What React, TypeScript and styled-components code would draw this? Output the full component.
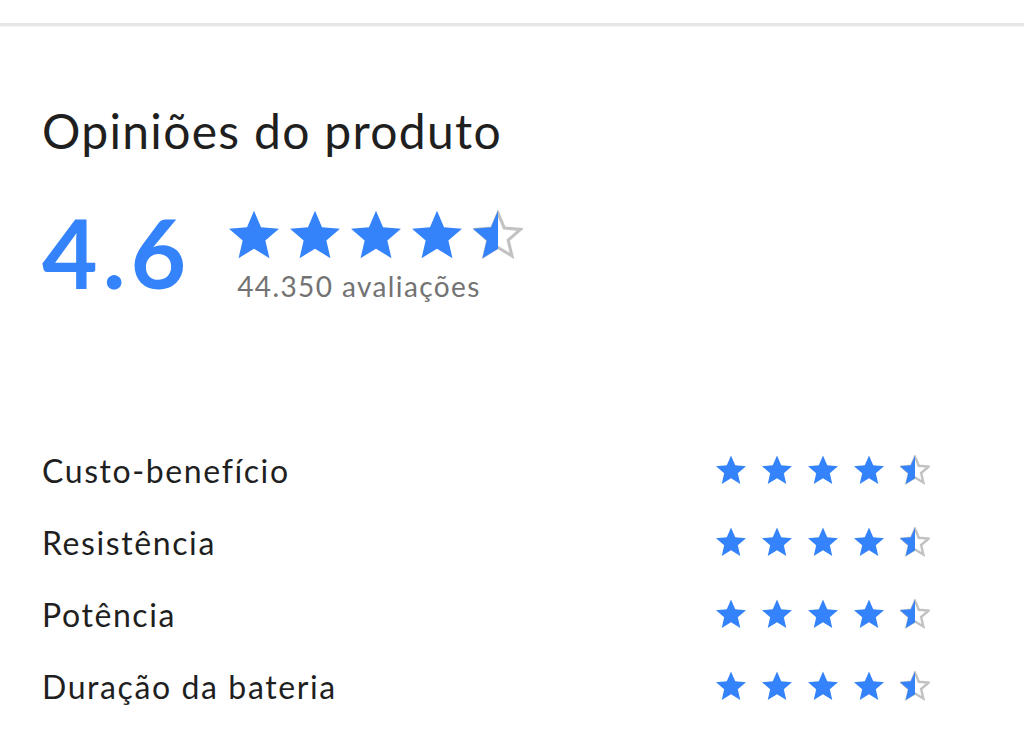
import styled, { createGlobalStyle } from "styled-components";

const GlobalStyle = createGlobalStyle`
  body {
    margin: 0;
    background: #ffffff;
    font-family: "Lato", "Open Sans", sans-serif;
  }
`;

const Page = styled.div`
  width: 1024px;
  height: 739px;
  background: #fff;
  overflow: hidden;
`;

const Divider = styled.div`
  margin-top: 23px;
  height: 3px;
  background: #e6e6e6;
  box-shadow: 0 1px 1px rgba(0, 0, 0, 0.04);
`;

const Section = styled.section`
  padding: 0 94px 0 42px;
`;

const Title = styled.h2`
  margin: 77px 0 0;
  font-size: 48px;
  font-weight: 400;
  line-height: 56px;
  color: #1f1f1f;
  letter-spacing: 1.3px;
`;

const Summary = styled.div`
  display: flex;
  align-items: flex-start;
  gap: 38px;
  margin-top: 38px;
`;

const Average = styled.div`
  font-size: 96px;
  font-weight: 700;
  line-height: 110px;
  color: #3483fa;
  letter-spacing: 5px;
`;

const SummaryRight = styled.div`
  display: flex;
  flex-direction: column;
  padding-top: 13px;
`;

const Stars = styled.div<{ gap: number }>`
  display: flex;
  gap: ${(p) => p.gap}px;
`;

const Count = styled.span`
  font-size: 28px;
  line-height: 32px;
  color: #737373;
  letter-spacing: 1.4px;
  margin: 10px 0 0 8px;
`;

const Rows = styled.div`
  margin-top: 141px;
  display: flex;
  flex-direction: column;
  gap: 28px;
`;

const Row = styled.div`
  display: flex;
  align-items: center;
  justify-content: space-between;
  height: 44px;
`;

const Label = styled.span`
  font-size: 32px;
  color: #1f1f1f;
  letter-spacing: 1.6px;
`;

const STAR =
  "M12 17.27L18.18 21l-1.64-7.03L22 9.24l-7.19-.61L12 2 9.19 8.63 2 9.24l5.46 4.73L5.82 21z";

function Star({ size, fill }: { size: number; fill: "full" | "half" }) {
  const id = `half-${size}`;
  return (
    <svg width={size} height={size} viewBox="2 2 20 19.5">
      {fill === "full" ? (
        <path d={STAR} fill="#3483fa" />
      ) : (
        <>
          <defs>
            <clipPath id={id}>
              <rect x="0" y="0" width="12" height="24" />
            </clipPath>
          </defs>
          <path
            d={STAR}
            fill="none"
            stroke="#c2c2c2"
            strokeWidth={size > 40 ? 1.4 : 1.8}
            strokeLinejoin="miter"
            transform="translate(12 12) scale(0.9) translate(-12 -12)"
          />
          <path d={STAR} fill="#3483fa" clipPath={`url(#${id})`} />
        </>
      )}
    </svg>
  );
}

function StarRow({ size, gap }: { size: number; gap: number }) {
  return (
    <Stars gap={gap}>
      <Star size={size} fill="full" />
      <Star size={size} fill="full" />
      <Star size={size} fill="full" />
      <Star size={size} fill="full" />
      <Star size={size} fill="half" />
    </Stars>
  );
}

const features = ["Custo-benefício", "Resistência", "Potência", "Duração da bateria"];

export default function App() {
  return (
    <Page>
      <GlobalStyle />
      <Divider />
      <Section>
        <Title>Opiniões do produto</Title>
        <Summary>
          <Average>4.6</Average>
          <SummaryRight>
            <StarRow size={50} gap={11} />
            <Count>44.350 avaliações</Count>
          </SummaryRight>
        </Summary>
        <Rows>
          {features.map((f) => (
            <Row key={f}>
              <Label>{f}</Label>
              <StarRow size={30} gap={16} />
            </Row>
          ))}
        </Rows>
      </Section>
    </Page>
  );
}
